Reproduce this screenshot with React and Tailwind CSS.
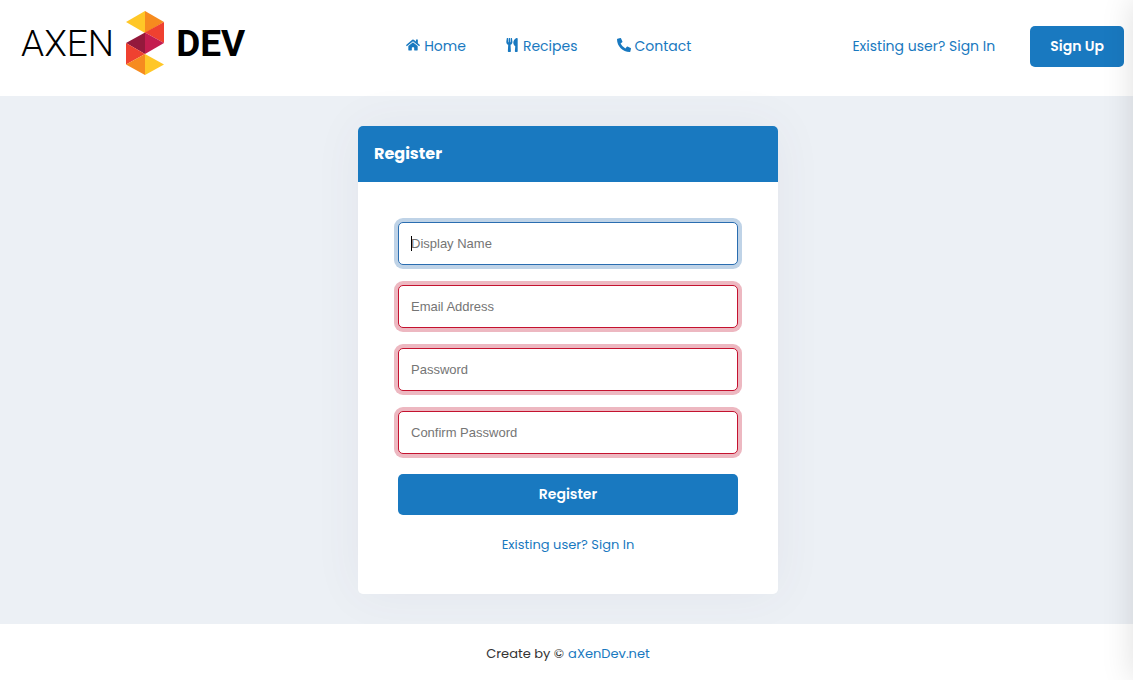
import React from "react";
import { FaHome, FaUtensils, FaPhoneAlt } from "react-icons/fa";

const navItems = [
  { label: "Home", Icon: FaHome },
  { label: "Recipes", Icon: FaUtensils },
  { label: "Contact", Icon: FaPhoneAlt },
];

const fields = [
  { id: "display-name", label: "Display Name", type: "text", active: true },
  { id: "email", label: "Email Address", type: "email", invalid: true },
  { id: "password", label: "Password", type: "password", invalid: true },
  { id: "confirm-password", label: "Confirm Password", type: "password", invalid: true },
];

function Logo() {
  return (
    <a href="#" className="flex items-center font-[Roboto,sans-serif] text-[37px] leading-none text-black">
      <span className="font-light">AXEN</span>
      <svg viewBox="0 0 38 64" className="mx-3 h-16 w-[38px]" aria-hidden="true">
        <path fill="#ffc727" d="M19 0 0 11l19 11z" />
        <path fill="#f68b1f" d="M19 0l19 11-19 11z" />
        <path fill="#ef4130" d="M38 11v21L19 21.500z" />
        <path fill="#94193c" d="M19 21.500 0 32l19 11z" />
        <path fill="#c41d50" d="M19 21.500 38 32 19 43z" />
        <path fill="#ef4130" d="M0 32v21.500L19 43z" />
        <path fill="#f68b1f" d="M19 43v21L0 53.500z" />
        <path fill="#ffc727" d="M19 43l19 10.500L19 64z" />
      </svg>
      <span className="font-bold">DEV</span>
    </a>
  );
}

function Field({ id, label, type, active, invalid }) {
  const tone = invalid
    ? "border-[#c4122f] ring-[#edb8c1]"
    : "border-[#2a6db0] ring-[#bfd3e7]";
  return (
    <div className="relative">
      <input
        id={id}
        type={type}
        placeholder={label}
        aria-label={label}
        aria-invalid={invalid || undefined}
        className={`block h-[43px] w-full rounded-[5px] border bg-white px-3 font-['Liberation_Sans',Arial,sans-serif] text-[13px] text-[#333] ring-4 outline-none placeholder:text-[#757575] ${tone}`}
      />
      {active && <span className="pointer-events-none absolute top-3.5 left-[13px] h-[15px] w-px bg-black" />}
    </div>
  );
}

export default function App() {
  return (
    <div className="flex min-h-screen flex-col overflow-x-hidden bg-white font-[Poppins,Inter,sans-serif] text-[#333]">
      <header className="flex h-24 items-start justify-between pr-[9px] pl-[21px]">
        <div className="pt-[11px]">
          <Logo />
        </div>
        <nav className="flex h-[92px] items-center gap-[39px] text-sm text-[#1979c0]">
          {navItems.map(({ label, Icon }) => (
            <a key={label} href="#" className="flex items-center gap-1">
              <Icon className="mb-0.5 h-3.5 w-auto" />
              {label}
            </a>
          ))}
        </nav>
        <div className="flex h-[92px] items-center gap-[35px] text-sm">
          <a href="#" className="text-[#1979c0]">Existing user? Sign In</a>
          <button type="button" className="h-[41px] rounded-[5px] bg-[#1979c0] px-5 font-semibold text-white">
            Sign Up
          </button>
        </div>
      </header>

      <main className="flex flex-1 items-start justify-center bg-[#ecf0f5] py-[30px] pl-[3px]">
        <section className="w-full max-w-[420px] rounded-[5px] bg-white shadow-[0_0_50px_rgba(82,63,105,0.06)]">
          <h1 className="flex h-14 items-center rounded-t-[5px] bg-[#1979c0] px-4 text-base font-bold text-white">
            Register
          </h1>
          <form className="flex flex-col gap-5 p-10 pb-[39px]" onSubmit={(e) => e.preventDefault()}>
            {fields.map((field) => (
              <Field key={field.id} {...field} />
            ))}
            <button type="submit" className="h-[41px] rounded-[5px] bg-[#1979c0] pb-0.5 text-sm font-semibold text-white">
              Register
            </button>
            <a href="#" className="text-center text-[13px] leading-5 text-[#1979c0]">
              Existing user? Sign In
            </a>
          </form>
        </section>
      </main>

      <footer className="relative flex h-14 items-center justify-center gap-1 bg-white pt-[3px] pl-[3px] text-[13px]">
        <span>Create by ©</span>
        <a href="#" className="text-[#1979c0]">aXenDev.net</a>
      </footer>

      <div className="pointer-events-none fixed inset-y-0 left-full w-64 shadow-[0_0_30px_rgba(0,0,0,0.13)]" />
    </div>
  );
}
